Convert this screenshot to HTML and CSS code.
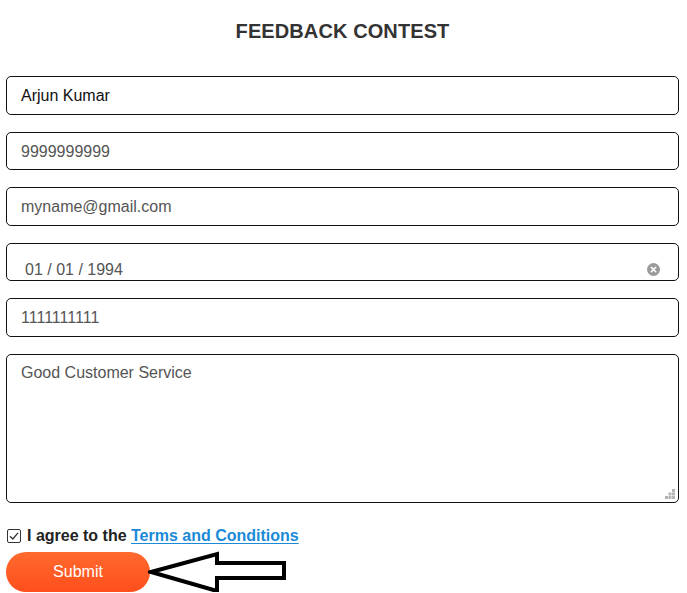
FILE: index.html
```html
<!DOCTYPE html>
<html>
<head>
<meta charset="utf-8">
<link rel="stylesheet" href="styles.css">
</head>
<body>
<form class="form">
  <h1 class="title">FEEDBACK CONTEST</h1>
  <div class="field"><span class="value dark">Arjun Kumar</span></div>
  <div class="field"><span class="value">9999999999</span></div>
  <div class="field"><span class="value">myname@gmail.com</span></div>
  <div class="field date"><span class="value">01 / 01 / 1994</span>
    <svg class="clear" width="13" height="13" viewBox="0 0 13 13"><circle cx="6.5" cy="6.5" r="6.5" fill="#9a9a9a"/><path d="M4.3 4.3L8.7 8.7M8.7 4.3L4.3 8.7" stroke="#fff" stroke-width="1.6" stroke-linecap="round"/></svg>
  </div>
  <div class="field"><span class="value">1111111111</span></div>
  <div class="field area"><span class="value">Good Customer Service</span>
    <svg class="grip" width="10" height="10" viewBox="0 0 10 10" fill="#b5b5b5"><rect x="7" y="0" width="3" height="3"/><rect x="3.5" y="3.5" width="3" height="3"/><rect x="7" y="3.5" width="3" height="3"/><rect x="0" y="7" width="3" height="3"/><rect x="3.5" y="7" width="3" height="3"/><rect x="7" y="7" width="3" height="3"/></svg>
  </div>
  <div class="agree">
    <span class="check"><svg width="14" height="14" viewBox="0 0 14 14"><rect x="0.5" y="0.5" width="13" height="13" rx="1.5" fill="#fff" stroke="#333"/><path d="M3 7.2L5.8 10L11 3.8" fill="none" stroke="#333" stroke-width="1.3"/></svg></span>
    <span class="agree-text">I agree to the <a class="link" href="#">Terms and Conditions</a></span>
  </div>
  <div class="submit-row">
    <button type="button" class="submit">Submit</button>
    <svg class="arrow" width="140" height="44" viewBox="0 0 140 44"><path d="M3 21L69 3V12H136V27H69V40Z" fill="#fff" stroke="#000" stroke-width="4" stroke-linejoin="miter"/></svg>
  </div>
</form>
</body>
</html>
```
FILE: styles.css
```css
* { box-sizing: border-box; }
html, body { margin: 0; padding: 0; background: #fff; }
body { font-family: "Liberation Sans", Arial, sans-serif; }
.form {
  width: 687px;
  padding: 0 8px 0 6px;
  display: flex;
  flex-direction: column;
}
.title {
  margin: 20px 0 0;
  height: 56px;
  font-size: 20px;
  line-height: 22px;
  font-weight: bold;
  color: #333;
  text-align: center;
  letter-spacing: 0.1px;
}
.field {
  position: relative;
  height: 38.5px;
  border: 1px solid #111;
  border-radius: 5px;
  margin-bottom: 17px;
  display: flex;
  align-items: center;
  padding: 0 14px;
  font-size: 16px;
  color: #555;
}
.field .value { position: relative; top: 1px; }
.value.dark { color: #111; }
.date { align-items: flex-end; padding: 0 18px 1px 18px; justify-content: space-between; }
.date .value { line-height: 20px; }
.clear { margin-bottom: 3px; }
.area { height: 149px; align-items: flex-start; padding-top: 9px; margin-bottom: 23px; }
.area .value { top: 0; }
.grip { position: absolute; right: 3px; bottom: 3px; }
.agree {
  display: flex;
  align-items: center;
  gap: 6px;
  height: 20px;
  padding-left: 1px;
  font-size: 16px;
  font-weight: bold;
  color: #222;
}
.check { display: flex; }
.link { color: #1a8ad8; text-decoration: underline; text-underline-offset: 2px; }
.submit-row { display: flex; align-items: center; margin-top: 6px; position: relative; }
.submit {
  width: 144px;
  height: 40px;
  border: none;
  border-radius: 20px;
  background: linear-gradient(#ff6a2e, #ff4f1c);
  color: #fff;
  font-family: "Liberation Sans", Arial, sans-serif;
  font-size: 16px;
  padding: 0;
}
.arrow { position: absolute; left: 142px; top: -1px; }
```
